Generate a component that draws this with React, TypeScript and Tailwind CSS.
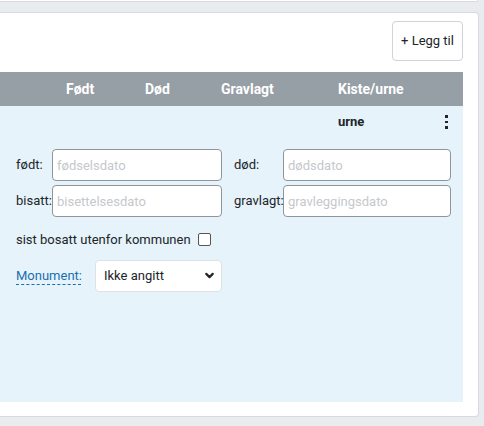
import { ChevronDown } from 'lucide-react';

function DateField({ label, placeholder, labelW, inputW }: { label: string; placeholder: string; labelW: string; inputW: string }) {
  return (
    <div className="flex items-center">
      <label className={`${labelW} shrink-0 whitespace-nowrap text-[13px] text-[#212529]`}>{label}</label>
      <input
        type="text"
        placeholder={placeholder}
        className={`${inputW} h-[32px] rounded-[4px] border border-[#8f959c] bg-white px-[4px] text-[13px] outline-none placeholder:text-[#c5c8cc]`}
      />
    </div>
  );
}

export default function App() {
  return (
    <div className="h-[426px] w-[484px] overflow-hidden bg-[#e9ecef] font-['Roboto',sans-serif] text-[#212529]">
      <div className="mr-[6px] h-[2px] rounded-br-[4px] border-b border-r border-[#d6dadf] bg-white" />
      <div className="mr-[5px] mt-[10px] flex h-[405px] flex-col rounded-r-[4px] border-y border-r border-[#d6dadf] bg-white pr-[15px]">
        <div className="flex justify-end pt-[8px]">
          <button className="h-[40px] w-[71px] rounded-[4px] border border-[#ced4da] bg-white text-[13px] text-[#212529]">
            + Legg til
          </button>
        </div>

        <div className="mt-[11px] flex h-[34px] items-center bg-[#969ea6] text-[14px] font-bold text-white">
          <div className="flex-1" />
          <div className="w-[79px]">Født</div>
          <div className="w-[76px]">Død</div>
          <div className="w-[117px]">Gravlagt</div>
          <div className="w-[125px]">Kiste/urne</div>
        </div>

        <div className="h-[296px] bg-[#e6f3fa]">
          <div className="flex h-[32px] items-center text-[13px]">
            <div className="flex-1" />
            <div className="w-[100px] font-bold">urne</div>
            <div className="flex w-[25px] flex-col items-center justify-center gap-[3px] pr-[8px]">
              <span className="h-[2.5px] w-[2.5px] bg-[#212529]" />
              <span className="h-[2.5px] w-[2.5px] bg-[#212529]" />
              <span className="h-[2.5px] w-[2.5px] bg-[#212529]" />
            </div>
          </div>

          <div className="pl-[16px] pt-[11px]">
            <div className="flex flex-col gap-[4px]">
              <div className="flex gap-[12px]">
                <DateField label="født:" placeholder="fødselsdato" labelW="w-[36px]" inputW="w-[170px]" />
                <DateField label="død:" placeholder="dødsdato" labelW="w-[49px]" inputW="w-[168px]" />
              </div>
              <div className="flex gap-[12px]">
                <DateField label="bisatt:" placeholder="bisettelsesdato" labelW="w-[36px]" inputW="w-[170px]" />
                <DateField label="gravlagt:" placeholder="gravleggingsdato" labelW="w-[49px]" inputW="w-[168px]" />
              </div>
            </div>

            <div className="mt-[13px] flex items-center gap-[7px] text-[13px]">
              <span>sist bosatt utenfor kommunen</span>
              <span className="h-[13px] w-[13px] rounded-[2px] border border-[#555] bg-white" />
            </div>

            <div className="mt-[10px] flex items-center">
              <span className="w-[79px] text-[13px] text-[#1a6fb0] underline decoration-dashed decoration-[1px] underline-offset-[4px]">
                Monument:
              </span>
              <div className="flex h-[32px] w-[127px] items-center justify-between rounded-[4px] border border-[#dee2e6] bg-white pl-[8px] pr-[5px] text-[13px]">
                <span>Ikke angitt</span>
                <ChevronDown size={13} strokeWidth={4} />
              </div>
            </div>
          </div>
        </div>
      </div>
    </div>
  );
}
